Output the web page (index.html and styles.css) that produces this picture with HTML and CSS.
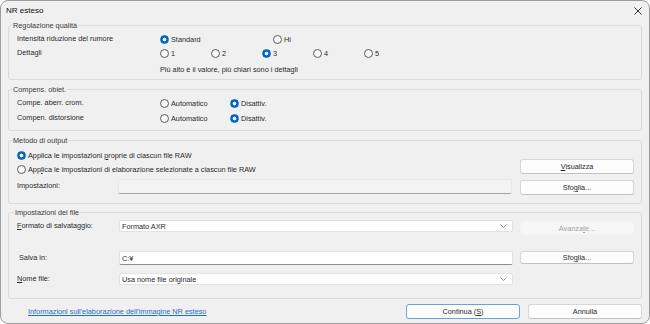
FILE: index.html
```html
<!DOCTYPE html>
<html lang="it">
<head>
<meta charset="utf-8">
<title>NR esteso</title>
<link rel="stylesheet" href="styles.css">
</head>
<body>
<div class="window">
  <div class="titlebar">
    <span class="title">NR esteso</span>
    <svg class="close" width="8" height="8" viewBox="0 0 8 8"><path d="M0.5 0.5 L7.5 7.5 M7.5 0.5 L0.5 7.5" stroke="#222" stroke-width="0.9" fill="none"/></svg>
  </div>

  <div class="group g1">
    <div class="legend">Regolazione qualità</div>
    <div class="row">
      <span class="label">Intensità riduzione del rumore</span>
      <span class="opt w113"><span class="radio on"></span>Standard</span>
      <span class="opt"><span class="radio"></span>Hi</span>
    </div>
    <div class="row">
      <span class="label">Dettagli</span>
      <span class="opt w51"><span class="radio"></span>1</span>
      <span class="opt w51"><span class="radio"></span>2</span>
      <span class="opt w51"><span class="radio on"></span>3</span>
      <span class="opt w51"><span class="radio"></span>4</span>
      <span class="opt w51"><span class="radio"></span>5</span>
    </div>
    <div class="row note">
      <span class="label"></span>
      <span>Più alto è il valore, più chiari sono i dettagli</span>
    </div>
  </div>

  <div class="group g2">
    <div class="legend">Compens. obiet.</div>
    <div class="row r15">
      <span class="label">Compe. aberr. crom.</span>
      <span class="opt w70"><span class="radio"></span>Automatico</span>
      <span class="opt"><span class="radio on"></span>Disattiv.</span>
    </div>
    <div class="row r15">
      <span class="label">Compen. distorsione</span>
      <span class="opt w70"><span class="radio"></span>Automatico</span>
      <span class="opt"><span class="radio on"></span>Disattiv.</span>
    </div>
  </div>

  <div class="group g3">
    <div class="legend">Metodo di output</div>
    <div class="split">
      <div class="leftcol">
        <div class="row"><span class="opt"><span class="radio on"></span><span class="optlabel">Applica le impostazioni <u>p</u>roprie di ciascun file RAW</span></span></div>
        <div class="row"><span class="opt"><span class="radio"></span><span class="optlabel">App<u>l</u>ica le impostazioni di elaborazione selezionate a ciascun file RAW</span></span></div>
        <div class="setrow">
          <span class="setlabel">Impostazioni:</span>
          <span class="field disabled"></span>
        </div>
      </div>
      <div class="rightcol">
        <div class="btn"><span><u>V</u>isualizza</span></div>
        <div class="btn"><span>Sfo<u>g</u>lia...</span></div>
      </div>
    </div>
  </div>

  <div class="group g4">
    <div class="legend">Impostazioni del file</div>
    <div class="filegrid">
      <span class="flabel"><u>F</u>ormato di salvataggio:</span>
      <span class="field select"><span>Formato AXR</span><svg width="7" height="4" viewBox="0 0 7 4"><path d="M0.5 0.5 L3.5 3.5 L6.5 0.5" stroke="#777" stroke-width="0.8" fill="none"/></svg></span>
      <span class="btn disabled adv"><span>Avanza<u>t</u>e...</span></span>

      <span class="flabel salva">Salva in:</span>
      <span class="field path"><span>C:¥</span></span>
      <span class="btn sfo"><span>Sfo<u>g</u>lia...</span></span>

      <span class="flabel"><u>N</u>ome file:</span>
      <span class="field select"><span>Usa nome file originale</span><svg width="7" height="4" viewBox="0 0 7 4"><path d="M0.5 0.5 L3.5 3.5 L6.5 0.5" stroke="#777" stroke-width="0.8" fill="none"/></svg></span>
      <span></span>
    </div>
  </div>

  <div class="footer">
    <a class="link" href="#">Informazioni sull'elaborazione dell'immagine NR esteso</a>
    <div class="actions">
      <div class="btn default"><span>Continua (<u>S</u>)</span></div>
      <div class="btn"><span>Annulla</span></div>
    </div>
  </div>
</div>
</body>
</html>
```

FILE: styles.css
```css
* { box-sizing: border-box; }
html, body { margin: 0; padding: 0; }
body {
  width: 650px;
  height: 324px;
  background: #ffffff;
  font-family: "Liberation Sans", Arial, sans-serif;
  font-size: 7.3px;
  color: #2a2a2a;
}
u { text-decoration: underline; text-underline-offset: 1px; }

.window {
  width: 650px;
  height: 324px;
  border: 1px solid #9c9c9c;
  border-radius: 8px;
  background: #f0f0f0;
  padding: 0 7px;
  overflow: hidden;
}

.titlebar {
  height: 24px;
  display: flex;
  justify-content: space-between;
  align-items: flex-start;
  padding-top: 4px;
}
.title {
  margin-left: -2px;
  font-size: 8px;
  line-height: 11px;
  color: #111;
}
.close { margin-top: 2px; }

.group {
  border: 1px solid #dadada;
  border-radius: 3px;
  padding: 0 7px 3px 8px;
}
.legend {
  margin: -6px 0 0 -5px;
  height: 12px;
  line-height: 12px;
  padding: 0 1px;
  background: #f0f0f0;
  width: max-content;
  color: #3a3a3a;
}

.row {
  display: flex;
  align-items: center;
  height: 14px;
}
.row.r15 { height: 15px; }
.row.note { margin-top: 2px; }
.label {
  width: 143px;
  flex: none;
  padding-bottom: 2px;
}
.opt {
  display: flex;
  align-items: center;
  gap: 2px;
  flex: none;
}
.w113 { width: 113px; }
.w51 { width: 51px; }
.w70 { width: 70px; }

.radio {
  width: 9px;
  height: 9px;
  border: 1px solid #5c5c5c;
  border-radius: 50%;
  background: #f8f8f8;
  flex: none;
}
.radio.on {
  border-color: #0067c0;
  background: radial-gradient(circle, #ffffff 0 1.6px, #0067c0 2.2px);
}

.g2, .g3, .g4 { margin-top: 9px; }
.g2 { padding-bottom: 4px; }
.g3 { padding-bottom: 8px; margin-bottom: 8px; }
.g4 { margin-top: 0; padding-bottom: 13px; }
.g4 .legend { margin-left: -3px; }

.split {
  display: flex;
  gap: 8px;
}
.leftcol {
  flex: 1;
  padding-top: 1px;
}
.setrow {
  display: flex;
  align-items: center;
  margin-top: 3px;
  height: 15px;
}
.setlabel {
  width: 101px;
  flex: none;
  padding-bottom: 3px;
}
.setrow .field { flex: 1; height: 15px; }
.rightcol {
  width: 114px;
  padding-top: 12px;
  display: flex;
  flex-direction: column;
  gap: 6px;
}

.btn {
  height: 15px;
  border: 1px solid #d6d6d6;
  border-bottom-color: #c2c2c2;
  border-radius: 3px;
  background: #fdfdfd;
  display: flex;
  align-items: center;
  justify-content: center;
  color: #2a2a2a;
}
.btn.default { border-color: #6aa3dc; }
.btn.disabled {
  background: #f6f6f6;
  border-color: #f3f3f3;
  color: #a3a3a3;
}

.field {
  background: #ffffff;
  border: 1px solid #e2e2e2;
  border-radius: 2px;
  padding: 0 5px 0 2px;
  display: flex;
  align-items: center;
}
.field.disabled {
  background: #f3f3f3;
  border-color: #e8e8e8;
  border-bottom-color: #a6a6a6;
}
.field.select {
  justify-content: space-between;
  height: 12px;
}
.field.path {
  height: 14px;
  border-bottom-color: #8e8e8e;
}

.filegrid {
  display: grid;
  grid-template-columns: 95px 394px 114px;
  column-gap: 7px;
  margin-top: 1px;
  align-items: start;
}
.flabel {
  height: 12px;
  display: flex;
  align-items: center;
  padding-bottom: 1px;
}
.flabel.salva { padding-left: 2px; height: 14px; }
.adv { margin-top: 1px; height: 14px; }
.sfo { height: 13px; }
.filegrid > :nth-child(n+4) { margin-top: 16px; }
.filegrid > :nth-child(n+7) { margin-top: 8px; }

.footer {
  margin-top: 5px;
  display: flex;
  justify-content: space-between;
  align-items: center;
}
.link {
  margin-left: 20px;
  color: #1a6fc9;
  text-decoration: underline;
}
.actions {
  display: flex;
  gap: 8px;
}
.actions .btn { width: 114px; }
```
